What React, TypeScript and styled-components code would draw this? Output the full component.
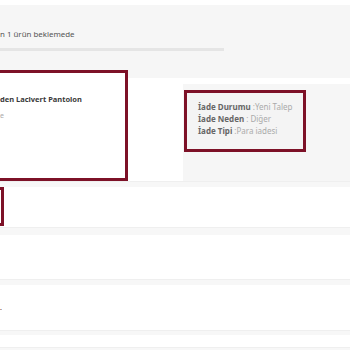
import React from "react";
import styled, { createGlobalStyle } from "styled-components";

const Global = createGlobalStyle`
  html, body { margin: 0; padding: 0; background: #ffffff; }
  body { font-family: "Noto Sans", "Open Sans", sans-serif; width: 350px; height: 350px; overflow: hidden; }
`;

const MAROON = "#7d1127";

const Page = styled.div`
  width: 350px;
  height: 350px;
  display: flex;
  flex-direction: column;
  padding-top: 5px;
  box-sizing: border-box;
  overflow: hidden;
`;

const Header = styled.div`
  background: #f6f6f6;
  height: 43px;
  display: flex;
  align-items: flex-end;
  padding-bottom: 9px;
  box-sizing: border-box;
  font-size: 7.9px;
  color: #555;
`;

const Progress = styled.div`
  height: 3px;
  background: #f6f6f6;
  display: flex;
`;

const ProgressFill = styled.div`
  background: #e5e5e5;
  height: 100%;
`;

const Strip = styled.div`
  background: #f6f6f6;
  height: 19px;
`;

const ItemRow = styled.div`
  display: flex;
  height: 112px;
`;

const ProductBox = styled.div`
  width: 128px;
  border: 3px solid ${MAROON};
  border-left: none;
  background: #fff;
  box-sizing: border-box;
  padding-top: 21px;
  display: flex;
  flex-direction: column;
  gap: 7px;
`;

const ProductName = styled.div`
  font-size: 7.5px;
  font-weight: 700;
  color: #3a3a3a;
`;

const ProductMeta = styled.div`
  font-size: 7px;
  color: #aaa;
`;

const RightSide = styled.div`
  flex: 1;
  display: flex;
  flex-direction: column;
`;

const RightTop = styled.div`
  height: 8px;
  background: #f6f6f6;
  border-bottom: 6px solid #fff;
`;

const RightBody = styled.div`
  flex: 1;
  display: flex;
`;

const Spacer = styled.div`
  width: 55px;
  background: #fff;
`;

const StatusPanel = styled.div`
  flex: 1;
  background: #f6f6f6;
  padding-top: 6px;
`;

const StatusBox = styled.div`
  width: 122px;
  height: 62px;
  margin-left: 1px;
  border: 3px solid ${MAROON};
  box-sizing: border-box;
  padding: 8px 0 0 11px;
  display: flex;
  flex-direction: column;
  background: #f4f4f4;
`;

const StatusLine = styled.div`
  font-size: 8px;
  line-height: 12px;
  color: #aaa;
  white-space: nowrap;
`;

const Label = styled.span`
  font-weight: 700;
  color: #666;
`;

const Band = styled.div<{ h: number }>`
  height: ${(p) => p.h}px;
  background: #f7f7f7;
  border-top: 1px solid #efefef;
  box-sizing: border-box;
`;

const Row = styled.div<{ h: number }>`
  height: ${(p) => p.h}px;
  background: #fff;
  display: flex;
  align-items: center;
`;

const Marker = styled.div`
  width: 4px;
  height: 39px;
  border: 3px solid ${MAROON};
  border-left: none;
  box-sizing: border-box;
  align-self: flex-start;
`;

const Tiny = styled.span`
  font-size: 7px;
  color: #5a2030;
`;

export default function App() {
  return (
    <>
      <Global />
      <Page>
        <Header>n 1 ürün beklemede</Header>
        <Progress>
          <ProgressFill style={{ width: "224px" }} />
        </Progress>
        <Strip />
        <ItemRow>
          <ProductBox>
            <ProductName>den Lacivert Pantolon</ProductName>
            <ProductMeta>e</ProductMeta>
          </ProductBox>
          <RightSide>
            <RightTop />
            <RightBody>
              <Spacer />
              <StatusPanel>
                <StatusBox>
                  <StatusLine>
                    <Label>İade Durumu</Label> :Yeni Talep
                  </StatusLine>
                  <StatusLine>
                    <Label>İade Neden</Label> : Diğer
                  </StatusLine>
                  <StatusLine>
                    <Label>İade Tipi</Label> :Para iadesi
                  </StatusLine>
                </StatusBox>
              </StatusPanel>
            </RightBody>
          </RightSide>
        </ItemRow>
        <Band h={6} />
        <Row h={40}>
          <Marker />
        </Row>
        <Band h={8} />
        <Row h={44} />
        <Band h={6} />
        <Row h={45}>
          <Tiny>.</Tiny>
        </Row>
        <Band h={5} />
        <Row h={12} />
        <Band h={3} />
      </Page>
    </>
  );
}
